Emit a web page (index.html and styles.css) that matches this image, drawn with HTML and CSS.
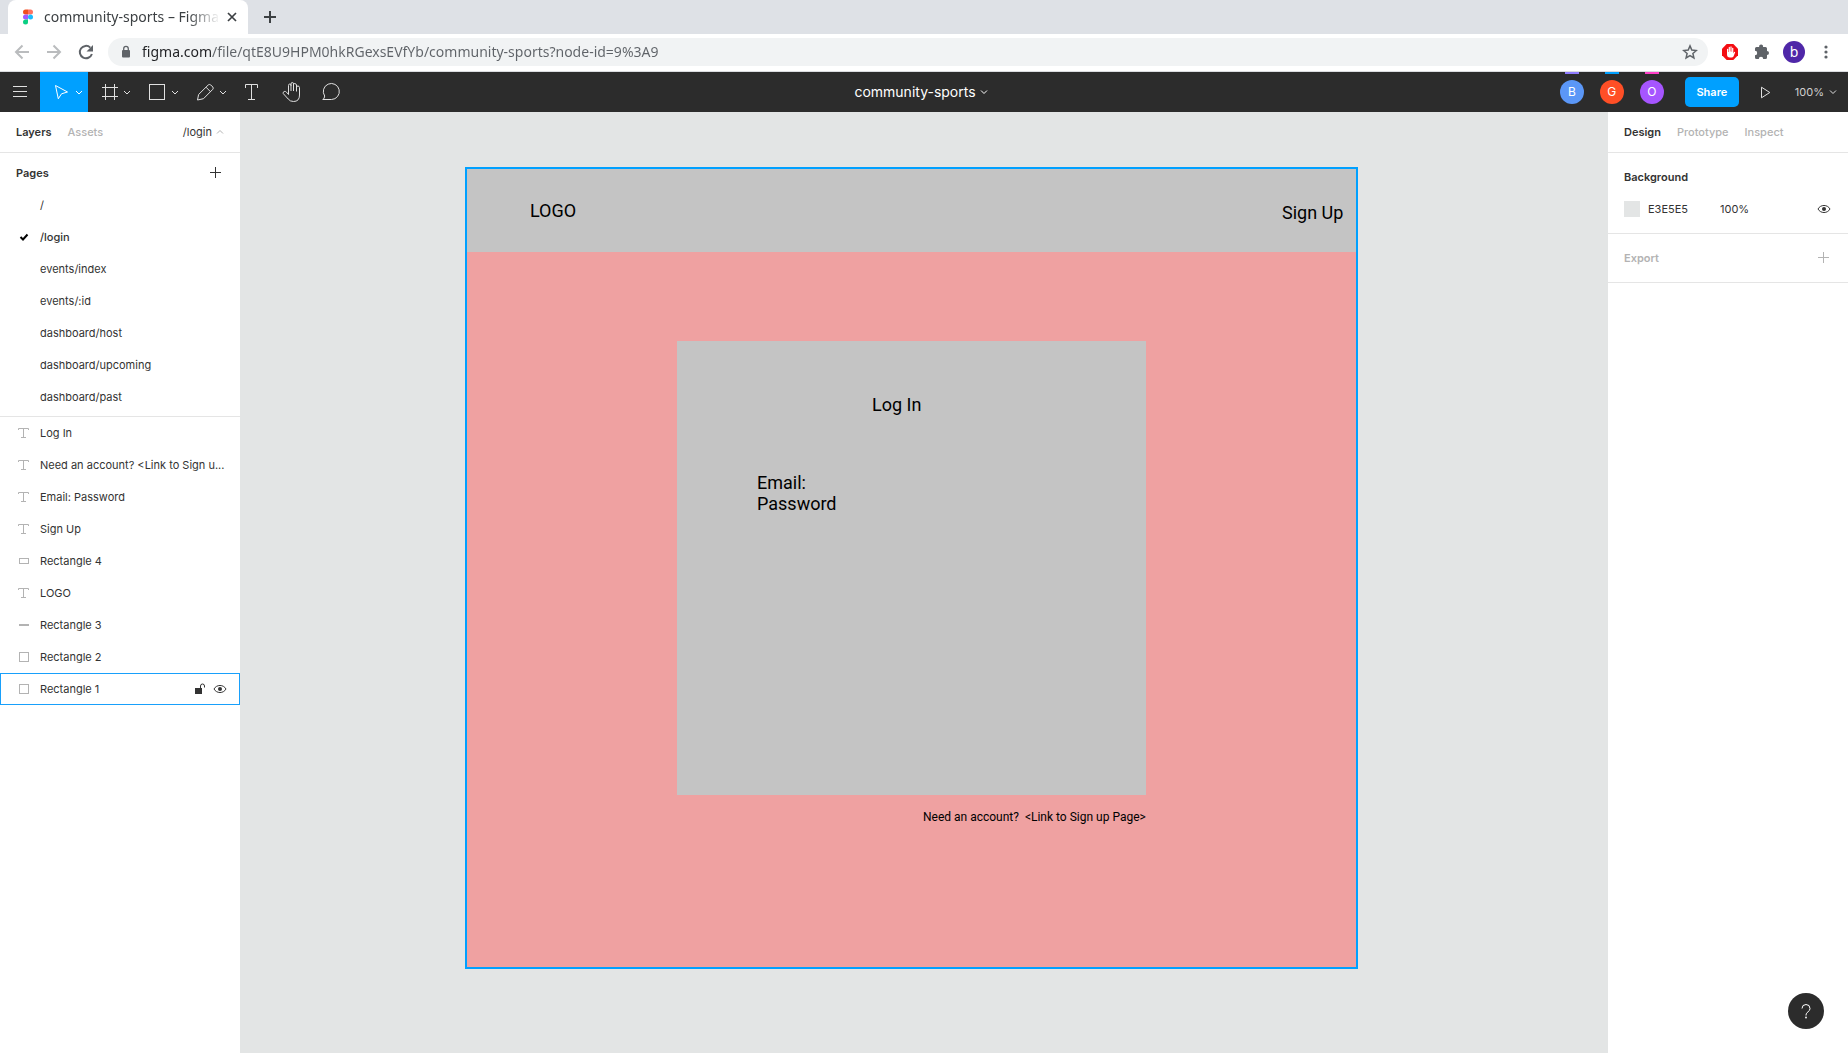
FILE: index.html
```html
<!DOCTYPE html>
<html lang="en">
<head>
<meta charset="utf-8">
<meta name="viewport" content="width=device-width, initial-scale=1">
<title>community-sports – Figma</title>
<link rel="stylesheet" href="styles.css">
</head>
<body>
<svg class="defs" aria-hidden="true">
  <symbol id="i-text" viewBox="0 0 16 16"><path d="M2.500 5V3.500H12.500V5M7.500 3.500V12.500M5 12.500H10"/></symbol>
  <symbol id="i-square" viewBox="0 0 16 16"><rect x="3.500" y="3.500" width="9" height="9"/></symbol>
  <symbol id="i-wide" viewBox="0 0 16 16"><rect x="3.500" y="5.500" width="9" height="5"/></symbol>
  <symbol id="i-line" viewBox="0 0 16 16"><path stroke-width="2" d="M3 8H13"/></symbol>
  <symbol id="i-plus" viewBox="0 0 16 16"><path d="M7.500 2V13M2 7.500H13"/></symbol>
  <symbol id="i-eye" viewBox="0 0 16 16"><path d="M2 8C4.500 3.300 11.500 3.300 14 8C11.500 12.700 4.500 12.700 2 8Z"/><circle cx="8" cy="8" r="2" fill="currentColor" stroke="none"/></symbol>
  <symbol id="i-chev" viewBox="0 0 8 8"><path d="M1 2.500L4 5.500L7 2.500"/></symbol>
</svg>

<header class="browser">
  <div class="tabs">
    <div class="tab">
      <svg class="favicon" viewBox="0 0 10 16"><path fill="#f24e1e" d="M5 0.500H2.500a2.500 2.500 0 0 0 0 5H5z"/><path fill="#ff7262" d="M5 .5h2.500a2.500 2.500 0 0 1 0 5H5z"/><path fill="#a259ff" d="M5 5.500H2.500a2.500 2.500 0 0 0 0 5H5z"/><circle cx="7.500" cy="8" r="2.500" fill="#1abcfe"/><path fill="#0acf83" d="M5 10.500H2.500a2.500 2.500 0 1 0 2.500 2.500z"/></svg>
      <span class="tab-title">community-sports – Figma</span>
      <button class="bare" aria-label="Close tab"><svg width="16" height="16" viewBox="0 0 16 16" stroke="#3c4043" stroke-width="1.700"><path d="M4 4L12 12M12 4L4 12"/></svg></button>
    </div>
    <button class="bare new-tab" aria-label="New tab"><svg width="16" height="16" viewBox="0 0 16 16" stroke="#3c4043" stroke-width="2"><path d="M8 2V14M2 8H14"/></svg></button>
  </div>
  <div class="address-row">
    <button class="bare nav" aria-label="Back"><svg width="16" height="16" viewBox="0 0 16 16" fill="none" stroke="#babcbe" stroke-width="2"><path d="M15 8H2.500M8.500 1.500L2 8L8.500 14.500"/></svg></button>
    <button class="bare nav" aria-label="Forward"><svg width="16" height="16" viewBox="0 0 16 16" fill="none" stroke="#babcbe" stroke-width="2"><path d="M1 8H13.500M7.500 1.500L14 8L7.500 14.500"/></svg></button>
    <button class="bare nav" aria-label="Reload"><svg width="16" height="16" viewBox="0 0 16 16" fill="none" stroke="#5f6368" stroke-width="2"><path d="M13.900 10A6.200 6.200 0 1 1 12.300 3.600"/><path fill="#5f6368" stroke="none" d="M15 1V7.500H8.500z"/></svg></button>
    <div class="omnibox">
      <svg width="12" height="14" viewBox="0 0 12 14"><rect x="2" y="5" width="8" height="7.500" rx="1" fill="#5f6368"/><path d="M3.700 6V3.700a2.300 2.300 0 0 1 4.600 0V6" fill="none" stroke="#5f6368" stroke-width="1.300"/></svg>
      <input class="url" type="text" aria-label="Address" value="figma.com/file/qtE8U9HPM0hkRGexsEVfYb/community-sports?node-id=9%3A9">
      <button class="bare" aria-label="Bookmark"><svg width="16" height="16" viewBox="0 0 16 16" fill="none" stroke="#5f6368" stroke-width="1.500"><path d="M8 1.900L9.800 6.100L14.300 6.500L10.900 9.500L11.900 13.900L8 11.600L4.100 13.900L5.100 9.500L1.700 6.500L6.200 6.100Z"/></svg></button>
    </div>
    <button class="bare ext" aria-label="Ad blocker"><svg width="16" height="16" viewBox="0 0 16 16"><path fill="#f40d12" d="M4.700 0h6.600L16 4.700v6.600L11.300 16H4.700L0 11.300V4.700z"/><path fill="#fff" d="M5 5q.6-.7 1.200 0v3h.5V3.200q.6-.7 1.200 0V7.500h.5V2.700q.6-.7 1.200 0v5h.5V4q.6-.7 1.200 0v5.500l.7-1.400q.7-.6 1.200.1l-1.700 4.300q-.6 1-1.900 1H7.800Q5 13.300 5 10.500z"/></svg></button>
    <button class="bare ext" aria-label="Extensions"><svg width="16" height="16" viewBox="0 0 16 16" fill="#5f6368"><path d="M1 4.500Q1 3 2.500 3H5.200A2 2 0 1 1 9 3H11.500Q13 3 13 4.500V7A2 2 0 1 1 13 11V13.500Q13 15 11.500 15H9.200A2.200 2.200 0 0 0 4.800 15H2.500Q1 15 1 13.500V11.200A2.200 2.200 0 0 0 1 6.800Z"/></svg></button>
    <button class="bare ext profile">b</button>
    <button class="bare ext" aria-label="Menu"><svg width="16" height="16" viewBox="0 0 16 16" fill="#5f6368"><circle cx="8" cy="3" r="1.600"/><circle cx="8" cy="8" r="1.600"/><circle cx="8" cy="13" r="1.600"/></svg></button>
  </div>
</header>

<div class="toolbar">
  <nav class="tools" aria-label="Tools">
    <button class="tool" aria-label="Main menu"><svg width="40" height="40" viewBox="0 0 40 40"><path d="M13 14.500H27M13 19.500H27M13 24.500H27"/></svg></button>
    <button class="tool active" aria-label="Move"><svg width="48" height="40" viewBox="0 0 48 40"><path d="M15.500 13.500L27.500 20L21.500 21.800L18.300 26.800Z"/><path d="M36 19L39 22L42 19"/></svg></button>
    <button class="tool" aria-label="Frame"><svg width="48" height="40" viewBox="0 0 48 40"><path d="M17.500 12V28M26.500 12V28M14 15.500H30M14 24.500H30"/><path d="M36 19L39 22L42 19"/></svg></button>
    <button class="tool" aria-label="Rectangle"><svg width="48" height="40" viewBox="0 0 48 40"><rect x="13.500" y="12.500" width="15" height="15"/><path d="M36 19L39 22L42 19"/></svg></button>
    <button class="tool" aria-label="Pen"><svg width="48" height="40" viewBox="0 0 48 40"><path d="M13.500 28L14.600 22.500L24.300 12.900Q25.500 12 26.700 12.900L28.800 15Q29.700 16.200 28.800 17.300L19.500 26.700L13.500 28M22 15.200L26.600 19.800"/><path d="M36 19L39 22L42 19"/></svg></button>
    <button class="tool" aria-label="Text"><svg width="40" height="40" viewBox="0 0 40 40"><path d="M13.500 16V12.500H25.500V16M19.500 12.500V27.500M16 27.500H23"/></svg></button>
    <button class="tool" aria-label="Hand"><svg width="40" height="40" viewBox="0 0 40 40"><path d="M16.500 21V13.500Q16.500 12 17.800 12T19 13.500V19M19 14V12Q19 10.500 20.300 10.500T21.500 12V19M21.500 12.500Q21.600 11.500 22.800 11.500T24.500 13V19.500M24.500 15Q24.700 14 26 14T27.500 15.500V23Q27.500 29.500 21.500 29.500Q18 29.500 16.200 27L11.200 21.500Q10.800 20 12.200 19.500Q13.500 19 14.500 20.200L16.500 22.500V20"/></svg></button>
    <button class="tool" aria-label="Comment"><svg width="40" height="40" viewBox="0 0 40 40"><path d="M10.800 27.500Q12.500 26.500 12.700 24A8 8 0 1 1 19.500 27.500Z"/></svg></button>
  </nav>
  <button class="file-name">community-sports <svg width="8" height="8"><use href="#i-chev"/></svg></button>
  <div class="actions">
    <button class="avatar blue">B</button>
    <button class="avatar red">G</button>
    <button class="avatar purple">O</button>
    <button class="share">Share</button>
    <button class="tool play" aria-label="Present"><svg width="16" height="16" viewBox="0 0 16 16"><path d="M4.500 3.200L12.800 8.500L4.500 13.800Z"/></svg></button>
    <button class="zoom">100% <svg width="8" height="8"><use href="#i-chev"/></svg></button>
  </div>
</div>

<main class="workspace">
  <aside class="panel left">
    <div class="panel-head">
      <button class="bare head-tab on">Layers</button>
      <button class="bare head-tab">Assets</button>
      <button class="bare page-switch">/login <svg class="flip" width="8" height="8"><use href="#i-chev"/></svg></button>
    </div>
    <section class="pages">
      <div class="pages-head"><h2>Pages</h2><button class="bare" aria-label="Add page"><svg width="16" height="16"><use href="#i-plus"/></svg></button></div>
      <ul>
        <li><button class="bare row page">/</button></li>
        <li><button class="bare row page current"><svg width="16" height="16" viewBox="0 0 16 16"><path stroke-width="2" d="M4.500 8L7 10.500L11.500 5.500"/></svg>/login</button></li>
        <li><button class="bare row page">events/index</button></li>
        <li><button class="bare row page">events/:id</button></li>
        <li><button class="bare row page">dashboard/host</button></li>
        <li><button class="bare row page">dashboard/upcoming</button></li>
        <li><button class="bare row page">dashboard/past</button></li>
      </ul>
    </section>
    <ul class="layers">
      <li class="row"><svg width="16" height="16"><use href="#i-text"/></svg><span>Log In</span></li>
      <li class="row"><svg width="16" height="16"><use href="#i-text"/></svg><span>Need an account? &lt;Link to Sign u...</span></li>
      <li class="row"><svg width="16" height="16"><use href="#i-text"/></svg><span>Email: Password</span></li>
      <li class="row"><svg width="16" height="16"><use href="#i-text"/></svg><span>Sign Up</span></li>
      <li class="row"><svg width="16" height="16"><use href="#i-wide"/></svg><span>Rectangle 4</span></li>
      <li class="row"><svg width="16" height="16"><use href="#i-text"/></svg><span>LOGO</span></li>
      <li class="row"><svg width="16" height="16"><use href="#i-line"/></svg><span>Rectangle 3</span></li>
      <li class="row"><svg width="16" height="16"><use href="#i-square"/></svg><span>Rectangle 2</span></li>
      <li class="row hovered"><svg width="16" height="16"><use href="#i-square"/></svg><span>Rectangle 1</span>
        <button class="bare" aria-label="Lock layer"><svg width="16" height="16" viewBox="0 0 16 16"><rect x="3" y="7" width="7" height="6" fill="currentColor" stroke="none"/><path d="M8.500 7V5a2 2 0 0 1 4 0V6.500"/></svg></button>
        <button class="bare" aria-label="Hide layer"><svg width="16" height="16"><use href="#i-eye"/></svg></button>
      </li>
    </ul>
  </aside>

  <section class="canvas" aria-label="Canvas">
    <div class="artboard">
      <div class="shape banner"></div>
      <div class="shape card"></div>
      <p class="label logo">LOGO</p>
      <p class="label sign-up">Sign Up</p>
      <p class="label log-in">Log In</p>
      <p class="label fields">Email:<br>Password</p>
      <p class="label small need">Need an account?  &lt;Link to Sign up Page&gt;</p>
    </div>
  </section>

  <aside class="panel right">
    <div class="panel-head">
      <button class="bare head-tab on">Design</button>
      <button class="bare head-tab">Prototype</button>
      <button class="bare head-tab">Inspect</button>
    </div>
    <section class="background">
      <h2>Background</h2>
      <div class="fill">
        <button class="bare swatch" aria-label="Fill colour"></button>
        <input class="hex" type="text" aria-label="Hex colour" value="E3E5E5">
        <input class="opacity" type="text" aria-label="Opacity" value="100%">
        <button class="bare" aria-label="Toggle fill"><svg width="16" height="16"><use href="#i-eye"/></svg></button>
      </div>
    </section>
    <section class="export">
      <h2>Export</h2>
      <button class="bare" aria-label="Add export"><svg width="16" height="16"><use href="#i-plus"/></svg></button>
    </section>
    <button class="help" aria-label="Help"><svg width="36" height="36" viewBox="0 0 36 36"><path d="M14 15.500Q14 11.500 18 11.500T22 15.500Q22 17.500 20 18.800T18 22V22.500"/><circle cx="18" cy="24.500" r=".9" fill="#fff" stroke="none"/></svg></button>
  </aside>
</main>
</body>
</html>
```
FILE: styles.css
```css
* { box-sizing: border-box; }

body {
  margin: 0;
  min-height: 100vh;
  display: flex;
  flex-direction: column;
  font: 11px/16px Inter, "Liberation Sans", sans-serif;
  color: #333;
  background: #fff;
}

h2, p, ul { margin: 0; padding: 0; font-size: inherit; font-weight: 600; }
ul { list-style: none; font-weight: 400; }
svg { display: block; flex: none; }
.defs { position: absolute; width: 0; height: 0; }

button, input {
  font: inherit;
  color: inherit;
  border: 0;
  padding: 0;
  background: none;
  min-width: 0;
}
button { display: flex; align-items: center; flex: none; }

/* Browser window */
.browser { font: 14px/20px "Noto Sans", "Open Sans", sans-serif; }
.tabs {
  display: flex;
  align-items: center;
  height: 34px;
  padding-left: 8px;
  background: #dee1e6;
}
.tab {
  display: flex;
  align-items: center;
  width: 240px;
  height: 34px;
  padding: 0 8px 0 15px;
  background: #fff;
  border-radius: 8px 8px 0 0;
  color: #3c4043;
}
.favicon { width: 10px; height: 16px; margin-right: 11px; }
.tab-title {
  flex: 1;
  margin-right: 4px;
  overflow: hidden;
  white-space: nowrap;
  -webkit-mask-image: linear-gradient(to left, transparent, #000 32px);
  mask-image: linear-gradient(to left, transparent, #000 32px);
}
.new-tab { margin-left: 14px; }
.address-row {
  display: flex;
  align-items: center;
  gap: 16px;
  height: 38px;
  padding: 0 14px 1px;
  border-bottom: 1px solid #dadce0;
}
.omnibox {
  flex: 1;
  display: flex;
  align-items: center;
  height: 28px;
  padding: 0 10px 0 12px;
  margin: 0 -2px;
  border-radius: 14px;
  background: #f1f3f4;
}
.url {
  flex: 1;
  margin-left: 10px;
  color: transparent;
  background: linear-gradient(to right, #202124 69px, #5f6368 69px);
  -webkit-background-clip: text;
  background-clip: text;
}
.profile {
  justify-content: center;
  width: 22px;
  height: 22px;
  margin: 0 -3px;
  border-radius: 50%;
  background: #4f27a8;
  color: #fff;
}

/* Editor toolbar */
.toolbar {
  display: grid;
  grid-template-columns: 1fr auto 1fr;
  align-items: center;
  height: 40px;
  background: #2c2c2c;
  color: #fff;
  stroke: #e0e0e0;
}
.toolbar svg, .panel svg { fill: none; }
.tools, .actions { display: flex; align-items: center; }
.tool.active { background: #00a0ff; stroke: #fff; }
.file-name { margin-right: 6px; font-size: 14px; gap: 4px; stroke: #fff; }
.actions { justify-content: flex-end; padding-right: 11px; }
.avatar {
  position: relative;
  justify-content: center;
  width: 24px;
  height: 24px;
  margin-right: 16px;
  border-radius: 50%;
  font-size: 12px;
}
.avatar::before {
  content: "";
  position: absolute;
  top: -8px;
  left: 5px;
  width: 14px;
  height: 2px;
}
.blue { background: #5b97f7; }
.blue::before { background: #907cff; }
.red { background: #ff4f26; }
.red::before { background: #00a0ff; }
.purple { background: #a655ff; }
.purple::before { background: #ff3fc8; }
.share {
  justify-content: center;
  width: 54px;
  height: 30px;
  margin-left: 5px;
  border-radius: 5px;
  background: #00a0ff;
  font-weight: 600;
}
.play { margin: 0 22px 0 18px; }
.zoom { gap: 5px; color: #d0d0d0; }

/* Workspace */
.workspace { flex: 1; display: flex; }
.panel { width: 240px; flex: none; background: #fff; stroke: #333; }
.panel-head {
  display: flex;
  align-items: center;
  gap: 16px;
  height: 41px;
  padding: 0 16px;
  border-bottom: 1px solid #e5e5e5;
}
.head-tab { font-weight: 500; color: #b3b3b3; }
.head-tab.on { font-weight: 600; color: #333; }
.page-switch { margin-left: auto; gap: 4px; stroke: #b3b3b3; }
.flip { transform: rotate(180deg); }
.pages { padding-bottom: 3px; border-bottom: 1px solid #e5e5e5; }
.pages-head {
  display: flex;
  align-items: center;
  justify-content: space-between;
  height: 36px;
  padding: 4px 16px 0;
}
.row {
  display: flex;
  align-items: center;
  width: 100%;
  height: 32px;
  padding: 0 12px 0 16px;
  border: 1px solid transparent;
  border-width: 1px 0;
}
.row.page { padding-left: 40px; border: 0; }
.row.current { padding-left: 16px; gap: 8px; font-weight: 500; stroke: #000; }
.layers .row { gap: 8px; stroke: #b3b3b3; }
.layers span {
  flex: 1;
  overflow: hidden;
  white-space: nowrap;
  text-overflow: ellipsis;
}
.layers .hovered { border: 1px solid #18a0fb; padding-left: 15px; padding-right: 11px; }
.layers button { stroke: #333; }
.layers button + button { margin-left: -4px; }

.canvas {
  position: relative;
  flex: 1;
  min-width: 0;
  overflow: hidden;
  background: #e3e5e5;
}
.artboard {
  position: absolute;
  left: 225px;
  top: 55px;
  width: 893px;
  height: 802px;
  border: 2px solid #00a0ff;
  background: #efa1a1;
  color: #000;
  font: 18px/21px Roboto, sans-serif;
}
.shape, .label { position: absolute; background: #c4c4c4; }
.label { background: none; white-space: pre; font-weight: 400; }
.banner { left: 0; top: 0; width: 100%; height: 83px; }
.card { left: 210px; top: 172px; width: 469px; height: 454px; }
.logo { left: 63px; top: 31px; }
.sign-up { left: 815px; top: 33px; }
.log-in { left: 405px; top: 225px; }
.fields { left: 290px; top: 303px; }
.small { font-size: 12px; line-height: 14px; }
.need { left: 456px; top: 641px; }

/* Right panel */
.right { position: relative; }
.background {
  height: 81px;
  padding: 16px;
  border-bottom: 1px solid #e5e5e5;
}
.fill {
  display: flex;
  align-items: center;
  margin-top: 16px;
}
.swatch { width: 16px; height: 16px; background: #e3e5e5; }
.hex { width: 64px; margin-left: 8px; margin-right: 8px; }
.opacity { flex: 1; }
.export {
  display: flex;
  align-items: center;
  justify-content: space-between;
  height: 49px;
  padding: 0 16px;
  border-bottom: 1px solid #e5e5e5;
  color: #b3b3b3;
  stroke: #b3b3b3;
}
.help {
  position: absolute;
  right: 24px;
  bottom: 24px;
  width: 36px;
  height: 36px;
  border-radius: 50%;
  background: #2c2c2c;
  stroke: #fff;
}
```
